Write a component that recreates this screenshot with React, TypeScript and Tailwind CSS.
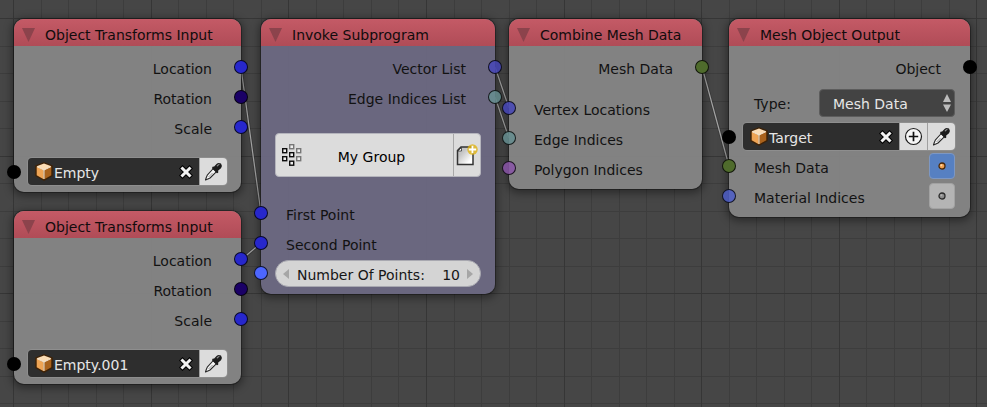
import { useId, useState, type ReactNode } from "react";

const GRID_STEP = 27.52;
const GRID_LINES = Array.from({ length: 100 }, (_, i) => i);

const LINKS = [
  "M241 68 L261 213",
  "M241 260 L261 243",
  "M495 67 L509 108",
  "M495 97 L509 138",
  "M702 67 L729 166",
];

function Backdrop() {
  return (
    <svg className="absolute inset-0 size-full" aria-hidden="true">
      {[false, true].map((major) => (
        <g key={String(major)} stroke={major ? "#363636" : "#3d3d3d"} strokeWidth="1">
          {GRID_LINES.filter((i) => (i % 5 === 0) === major).map((i) => {
            const x = Math.round(13.2 + i * GRID_STEP) + 0.5;
            const y = Math.round(18.2 + i * GRID_STEP) + 0.5;
            return (
              <g key={i}>
                <line x1={x} x2={x} y1="0" y2="100%" />
                <line x1="0" x2="100%" y1={y} y2={y} />
              </g>
            );
          })}
        </g>
      ))}
      {LINKS.map((d) => (
        <g key={d} fill="none">
          <path d={d} stroke="#2c2c2c" strokeOpacity="0.45" strokeWidth="3" />
          <path d={d} stroke="#a4a4a4" strokeWidth="1.2" />
        </g>
      ))}
    </svg>
  );
}

function Node({ title, place, tint, children }: { title: string; place: string; tint: string; children: ReactNode }) {
  return (
    <section
      className={`absolute flex flex-col rounded-[10px] shadow-[0_0_0_1px_rgba(0,0,0,0.3),0_2px_8px_2px_rgba(0,0,0,0.4)] ${place} ${tint}`}
    >
      <header className="flex h-[27px] items-center rounded-t-[10px] bg-linear-to-b from-[#c45a66] to-[#b04c57] pl-2">
        <button type="button" aria-label={`Collapse ${title}`} className="w-[23px] pt-1">
          <svg width="13" height="14" viewBox="0 0 13 14" className="block">
            <path d="M0 0H13L6.500 14Z" fill="#8c434c" />
          </svg>
        </button>
        <h2 className="pt-1 whitespace-nowrap text-[#120c0d]">{title}</h2>
      </header>
      {children}
    </section>
  );
}

function Socket({ side, color }: { side: "left" | "right"; color: string }) {
  return (
    <span
      className={`absolute top-1/2 size-[14px] -translate-y-1/2 rounded-full border border-black/80 ${
        side === "left" ? "-left-[7px]" : "-right-[7px]"
      } ${color}`}
    />
  );
}

function Output({ label, color }: { label: string; color: string }) {
  return (
    <div className="relative flex h-[30px] items-center justify-end pr-[29px]">
      <span className="pt-[3px]">{label}</span>
      <Socket side="right" color={color} />
    </div>
  );
}

function Input({ label, color }: { label: string; color: string }) {
  return (
    <div className="relative flex h-[30px] items-center pl-[25px]">
      <span className="pt-[3px]">{label}</span>
      <Socket side="left" color={color} />
    </div>
  );
}

function CubeIcon() {
  return (
    <svg width="18" height="19" viewBox="0 0 18 19" className="shrink-0">
      <path d="M9 1 L17 4 V13.500 L9 18 L1 13.500 V4Z" fill="#3d2208" stroke="#3d2208" strokeWidth="1.600" strokeLinejoin="round" />
      <path d="M9 1.500 L16.300 4.300 L9 8 L1.700 4.300Z" fill="#fbdcb4" />
      <path d="M1.700 4.600 L8.700 8.200 V17.200 L1.700 13.300Z" fill="#eea455" />
      <path d="M16.300 4.600 L9.300 8.200 V17.200 L16.300 13.300Z" fill="#a9621c" />
      <path d="M9 8 V17 M2 4.600 L9 8 L16 4.600" fill="none" stroke="#fff0dc" strokeWidth="1" />
    </svg>
  );
}

function CloseIcon() {
  return (
    <svg width="14" height="14" viewBox="0 0 14 14">
      <path d="M3.500 3.500 L10.500 10.500 M10.500 3.500 L3.500 10.500" stroke="#000" strokeWidth="5" strokeLinecap="square" />
      <path d="M3.500 3.500 L10.500 10.500 M10.500 3.500 L3.500 10.500" stroke="#f2f2f2" strokeWidth="3" strokeLinecap="square" />
    </svg>
  );
}

function DropperIcon() {
  return (
    <svg width="19" height="19" viewBox="0 0 19 19">
      <path d="M9.300 6.500 L12.500 9.700 L6 16 Q4 17 1.500 18 Q2.300 15 3.500 12.800Z" fill="#f4f4f4" stroke="#2a2a2a" strokeWidth="1.100" strokeLinejoin="round" />
      <path d="M4.500 15 L8.500 11" stroke="#9a9a9a" strokeWidth="1" />
      <path d="M8.500 4.800 L10.200 4.600 L12.500 2 Q14.500 0 17 1.600 Q18.800 4 17 6.300 L14.200 8.600 L14.200 10.800 L12.900 11.200 L8 6.200Z" fill="#1c1c1c" />
      <path d="M13.300 3.800 L15 2.400" stroke="#8a8a8a" strokeWidth="1.200" strokeLinecap="round" />
    </svg>
  );
}

function PlusIcon() {
  return (
    <svg width="19" height="19" viewBox="0 0 19 19" fill="none">
      <circle cx="9.500" cy="9.500" r="8" fill="#f6f6f6" stroke="#1c1c1c" strokeWidth="1.200" />
      <path d="M9.500 4.800 V14.200 M4.800 9.500 H14.200" stroke="#111" strokeWidth="1.700" />
    </svg>
  );
}

function NetworkIcon() {
  return (
    <svg width="20" height="22" viewBox="0 0 20 22" fill="#eee" strokeWidth="1.400">
      <g stroke="#777">
        <rect x="7.700" y="0.700" width="4" height="4" />
        <rect x="14.700" y="4.700" width="4" height="4" />
        <rect x="14.700" y="12.700" width="4" height="4" />
      </g>
      <g stroke="#0c0c0c">
        <rect x="0.700" y="4.700" width="4" height="4" />
        <rect x="0.700" y="12.700" width="4" height="4" />
        <rect x="7.700" y="8.700" width="4" height="4" />
        <rect x="7.700" y="17.200" width="4" height="4" />
      </g>
    </svg>
  );
}

function NewFileIcon() {
  return (
    <svg width="22" height="22" viewBox="0 0 22 22">
      <defs>
        <linearGradient id="paper" x1="0" y1="0" x2="1" y2="1">
          <stop offset="0.300" stopColor="#c4c4c4" />
          <stop offset="0.800" stopColor="#fff" />
        </linearGradient>
      </defs>
      <path d="M5 3 H17 V20.500 H1.500 V6.500Z" fill="url(#paper)" stroke="#333" strokeWidth="1.500" />
      <path d="M5.500 3.500 V7 H2Z" fill="#fff" stroke="#333" strokeWidth="0.800" />
      <circle cx="16.500" cy="5.500" r="5.200" fill="#e0b311" fillOpacity="0.800" />
      <path d="M16.500 1.800 V9.200 M12.800 5.500 H20.200" stroke="#fff" strokeWidth="1.900" />
    </svg>
  );
}

function ObjectField({ label, initial, insert }: { label: string; initial: string; insert?: boolean }) {
  const [value, setValue] = useState(initial);
  const side = "flex w-7 shrink-0 items-center justify-center border-l border-[#a0a0a0] bg-[#dcdcdc]";
  return (
    <div className={`relative flex h-[27px] pl-[14px] ${insert ? "pr-[15px]" : "pr-[14px]"}`}>
      <div className="flex min-w-0 flex-1 overflow-hidden rounded-[4px] shadow-[0_0_0_1px_rgba(160,160,160,0.4)]">
        <div className="flex min-w-0 flex-1 items-center bg-[#2e2e2e] pr-[6px] pl-[7px]">
          <CubeIcon />
          <input
            aria-label={label}
            value={value}
            onChange={(e) => setValue(e.target.value)}
            className="min-w-0 flex-1 bg-transparent pt-[3px] pl-px text-[#e6e6e6] outline-none"
          />
          <button type="button" aria-label={`Clear ${label}`} onClick={() => setValue("")}>
            <CloseIcon />
          </button>
        </div>
        {insert && (
          <button type="button" aria-label="Add object" className={side}>
            <PlusIcon />
          </button>
        )}
        <button type="button" aria-label="Pick object" className={side}>
          <DropperIcon />
        </button>
      </div>
      <Socket side="left" color="bg-black" />
    </div>
  );
}

function TransformsNode({ place, object }: { place: string; object: string }) {
  return (
    <Node title="Object Transforms Input" place={`w-[227px] ${place}`} tint="bg-[#868686]/95">
      <div className="pt-[6px] pb-[7px]">
        <Output label="Location" color="bg-[#2727cc]" />
        <Output label="Rotation" color="bg-[#1a0066]" />
        <Output label="Scale" color="bg-[#2727cc]" />
        <div className="pt-4">
          <ObjectField label="Source object" initial={object} />
        </div>
      </div>
    </Node>
  );
}

function ToggleInput({ label, color, initial }: { label: string; color: string; initial: boolean }) {
  const id = useId();
  const [on, setOn] = useState(initial);
  return (
    <div className="relative flex h-[30px] items-center justify-between pr-[15px] pl-[25px]">
      <label htmlFor={id} className="pt-[3px]">
        {label}
      </label>
      <span className="grid size-[26px] place-items-center">
        <input
          id={id}
          type="checkbox"
          checked={on}
          onChange={(e) => setOn(e.target.checked)}
          className="col-start-1 row-start-1 size-[26px] appearance-none rounded-[4px] border border-[#a2a2a2] bg-[#b4b4b4] checked:border-[#7d97c2] checked:bg-[#5680c2]"
        />
        <svg width="8" height="8" viewBox="0 0 8 8" className="pointer-events-none col-start-1 row-start-1">
          <circle cx="4" cy="4" r="3" fill={on ? "#f0a050" : "#8c8c8c"} stroke={on ? "#4a2808" : "#2a2a2a"} strokeWidth="1.300" />
          <circle cx="3.300" cy="3.300" r="1" fill={on ? "#ffd9a8" : "#b0b0b0"} />
        </svg>
      </span>
      <Socket side="left" color={color} />
    </div>
  );
}

function Arrow({ d, label, onClick }: { d: string; label: string; onClick: () => void }) {
  return (
    <button type="button" aria-label={label} onClick={onClick} className="shrink-0">
      <svg width="6" height="10" viewBox="0 0 6 10" className="block">
        <path d={d} fill="#a6a6a6" />
      </svg>
    </button>
  );
}

function SubprogramNode() {
  const [points, setPoints] = useState(10);
  return (
    <Node title="Invoke Subprogram" place="left-[261px] top-[19px] w-[234px]" tint="bg-[#6b6881]/97">
      <div className="pt-[6px] pb-[7px]">
        <Output label="Vector List" color="bg-[#4646b8]/85" />
        <Output label="Edge Indices List" color="bg-[#668e90]/85" />
        <div className="flex h-[65px] px-[14px] pt-[21px]">
          <div className="flex flex-1 overflow-hidden rounded-[4px] border border-[#b4b4bc] bg-[#dcdcdc] text-black">
            <button type="button" className="flex flex-1 items-center pl-[6px]">
              <NetworkIcon />
              <span className="flex-1 pt-[3px] pr-3">My Group</span>
            </button>
            <button type="button" aria-label="New subprogram" className="flex w-[27px] items-center justify-center border-l border-[#a8a8a8]">
              <NewFileIcon />
            </button>
          </div>
        </div>
        <div className="pt-[21px]">
          <Input label="First Point" color="bg-[#2727cc]" />
          <Input label="Second Point" color="bg-[#2727cc]" />
        </div>
        <div className="relative flex px-[14px] pt-[2px]">
          <div className="flex h-[27px] min-w-0 flex-1 items-center rounded-full border border-[#a8a8b0] bg-[#d4d4d4] px-[7px] text-[#161616]">
            <Arrow label="Decrease" d="M6 0V10L0 5Z" onClick={() => setPoints(points - 1)} />
            <label htmlFor="points" className="pt-[3px] pl-2 whitespace-nowrap">
              Number Of Points:
            </label>
            <input
              id="points"
              value={points}
              onChange={(e) => setPoints(Number(e.target.value) || 0)}
              className="w-0 min-w-0 flex-1 bg-transparent pt-[3px] pr-[7px] text-right outline-none"
            />
            <Arrow label="Increase" d="M0 0V10L6 5Z" onClick={() => setPoints(points + 1)} />
          </div>
          <Socket side="left" color="bg-[#4d66ff]" />
        </div>
      </div>
    </Node>
  );
}

function MeshOutputNode() {
  return (
    <Node title="Mesh Object Output" place="left-[729px] top-[19px] w-[241px]" tint="bg-[#868686]/95">
      <div className="py-[6px]">
        <Output label="Object" color="bg-black" />
        <div className="flex h-[41px] items-center justify-between pr-[15px] pl-[25px]">
          <label htmlFor="type" className="pt-[3px]">
            Type:
          </label>
          <div className="grid w-[136px] items-center">
            <select
              id="type"
              className="col-start-1 row-start-1 h-7 appearance-none rounded-[4px] border border-[#5c5c5c] bg-[#434343] pt-[2px] pl-[13px] text-[#e6e6e6]"
            >
              <option>Mesh Data</option>
              <option>BMesh</option>
              <option>Vertices</option>
            </select>
            <svg width="8" height="18" viewBox="0 0 8 18" className="pointer-events-none col-start-1 row-start-1 mr-1 justify-self-end">
              <path d="M4 0L8 8H0Z M0 10.500H8L4 18Z" fill="#bcbcbc" />
            </svg>
          </div>
        </div>
        <ObjectField label="Target object" initial="Target" insert />
        <div className="pt-px">
          <ToggleInput label="Mesh Data" color="bg-[#4f6b2c]" initial={true} />
          <ToggleInput label="Material Indices" color="bg-[#4d5ec8]/85" initial={false} />
        </div>
      </div>
    </Node>
  );
}

export default function App() {
  return (
    <main className="relative min-h-screen w-full overflow-hidden bg-[#464646] font-['DejaVu_Sans',sans-serif] text-[14px] leading-5 text-[#121212]">
      <Backdrop />
      <TransformsNode place="left-[14px] top-[19px]" object="Empty" />
      <TransformsNode place="left-[14px] top-[211px]" object="Empty.001" />
      <SubprogramNode />
      <Node title="Combine Mesh Data" place="left-[509px] top-[19px] w-[193px]" tint="bg-[#868686]/95">
        <div className="py-[6px]">
          <Output label="Mesh Data" color="bg-[#4f6b2c]" />
          <div className="pt-[11px]">
            <Input label="Vertex Locations" color="bg-[#4646b8]/85" />
            <Input label="Edge Indices" color="bg-[#668e90]/85" />
            <Input label="Polygon Indices" color="bg-[#8a55a8]/85" />
          </div>
        </div>
      </Node>
      <MeshOutputNode />
    </main>
  );
}
